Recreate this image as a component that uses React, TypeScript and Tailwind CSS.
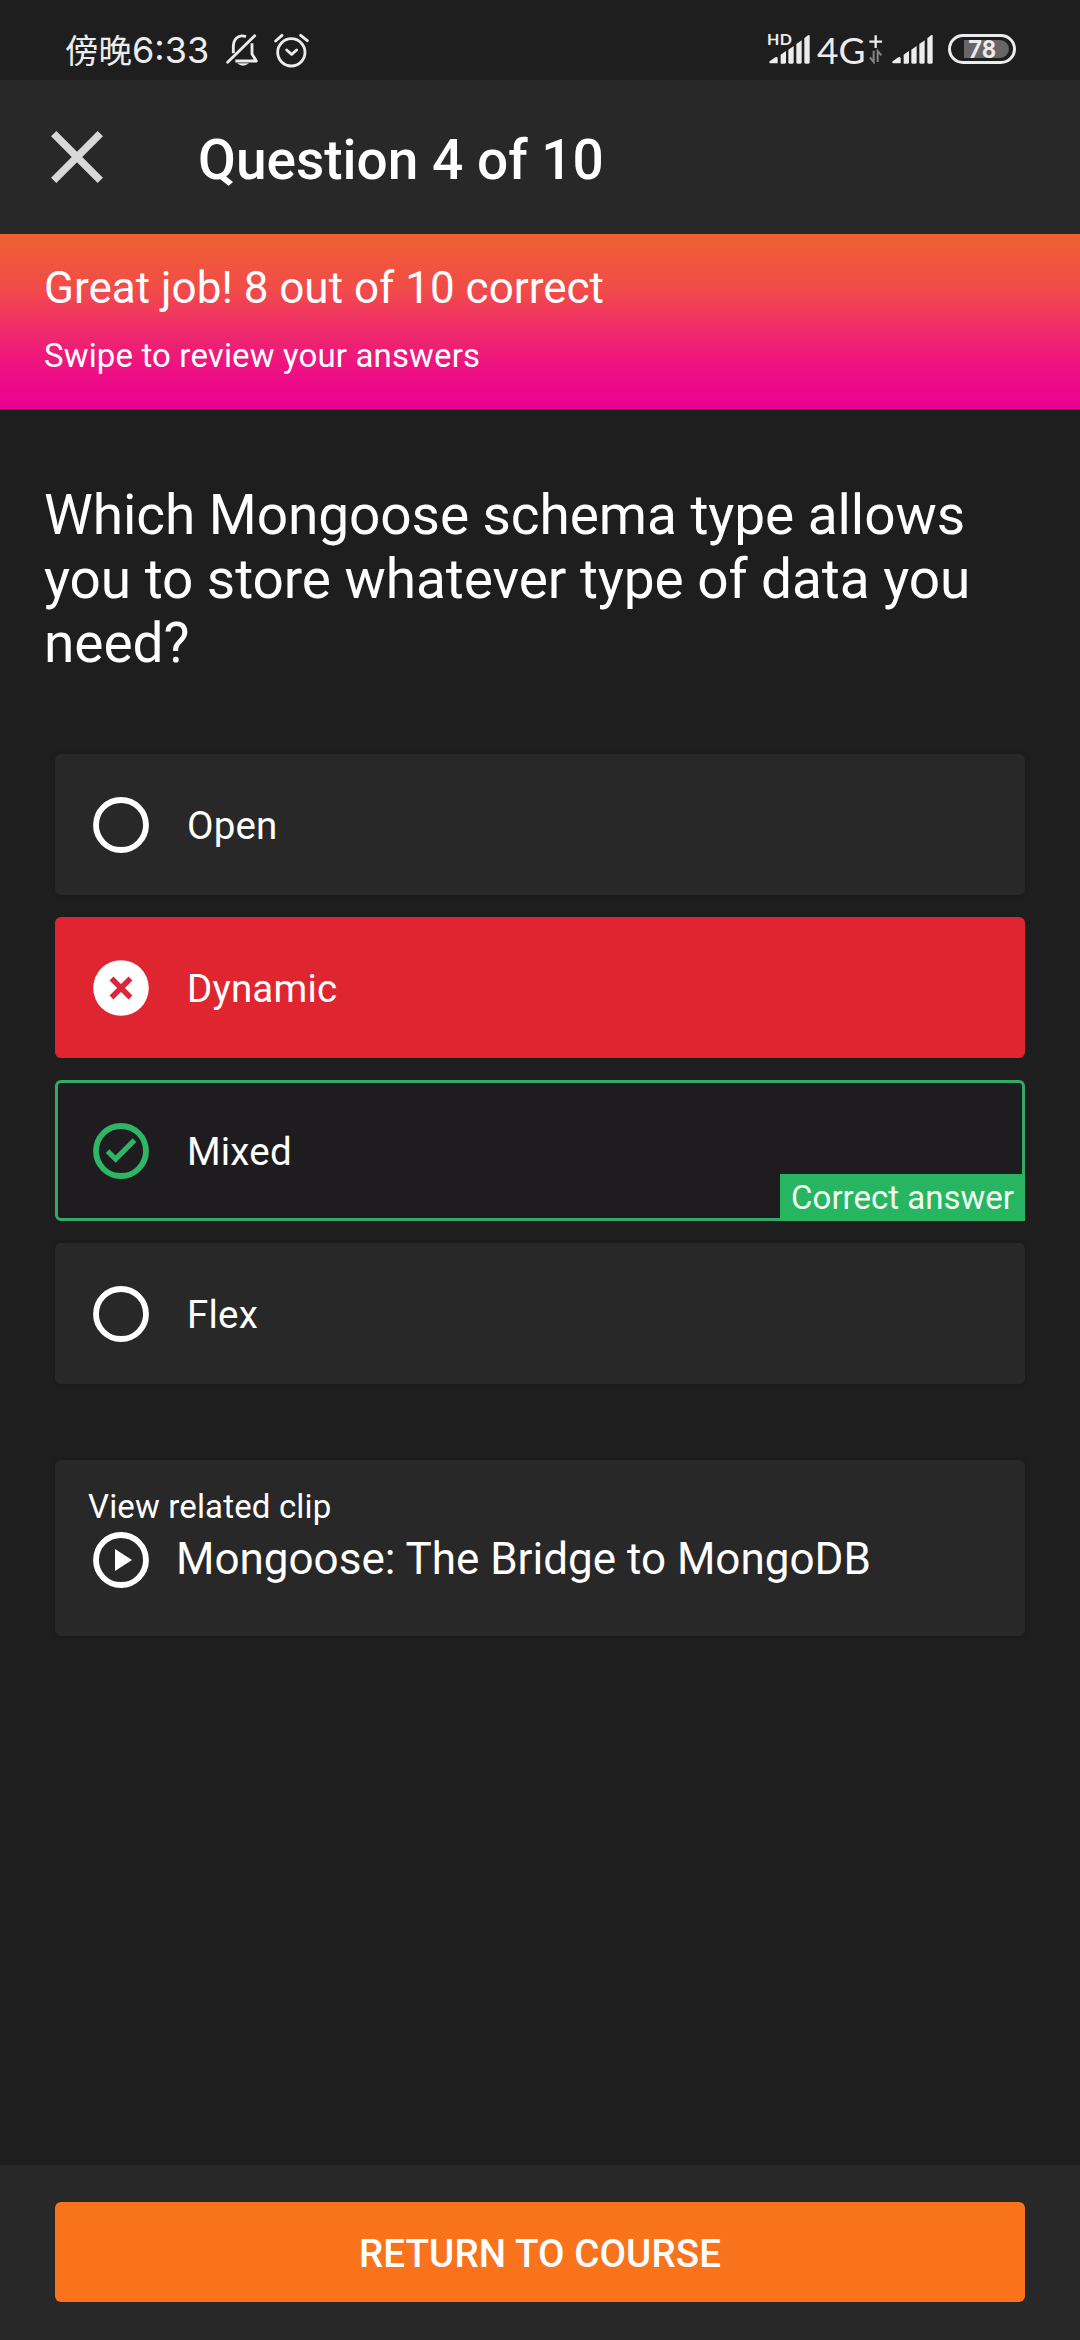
import type { ReactNode } from "react";

type OptionState = "idle" | "wrong" | "correct";

const OPTIONS: { label: string; state: OptionState }[] = [
  { label: "Open", state: "idle" },
  { label: "Dynamic", state: "wrong" },
  { label: "Mixed", state: "correct" },
  { label: "Flex", state: "idle" },
];

const CARD_CLASS: Record<OptionState, string> = {
  idle: "bg-[#282828] shadow-[0_0_5px_rgba(0,0,0,0.2)]",
  wrong: "bg-[#df2630]",
  correct: "bg-[#1e1c1f] border-[3px] border-[#35aa68]",
};

function SignalBars() {
  return (
    <svg className="block h-[30px] w-[41px]" viewBox="0 0 123 90" fill="#ececec">
      <path d="M3 88q-5-3 0-7l16-11q7-3 7 3v15z" />
      <path d="M35 62l16-11v34q0 4-4 4h-12z" />
      <path d="M58 47l16-11v49q0 4-4 4h-8q-4 0-4-4z" />
      <path d="M82 30l16-11v66q0 4-4 4h-8q-4 0-4-4z" />
      <path d="M106 13l11-9q5-3 5 3v78q0 4-4 4h-8q-4 0-4-4z" />
    </svg>
  );
}

function BellOff() {
  return (
    <svg className="block h-[33px] w-[33px]" viewBox="0 0 99 99" fill="none" stroke="#ececec" strokeWidth="8.5">
      <path d="M60 8C35-1 22 18 22 38V58" />
      <path d="M78 28V60L91 81H28" strokeLinejoin="round" />
      <path d="M5 85L86 5" strokeLinecap="round" />
      <path d="M33 88H69Q51 102 33 88z" fill="#ececec" stroke="none" />
    </svg>
  );
}

function Alarm() {
  return (
    <svg
      className="block h-[35px] w-[35px]"
      viewBox="0 0 105 105"
      fill="none"
      stroke="#ececec"
      strokeWidth="8.5"
      strokeLinecap="round"
      strokeLinejoin="round"
    >
      <circle cx="52" cy="58" r="41" />
      <path d="M5 24L24 7M80 7L100 23" />
      <path d="M38 51L53 64L68 51" />
    </svg>
  );
}

function StatusBar() {
  return (
    <div className="flex h-[80px] items-start justify-between bg-[#1e1e1e] pl-[65px] pr-[64px] text-[#ececec]">
      <div className="flex items-start">
        <span className="mt-[29px] w-[161px] whitespace-nowrap font-['Inter','Noto_Sans_CJK_TC',sans-serif] text-[36px] leading-[42px]">
          <span className="text-[33.5px]">傍晚</span>6:33
        </span>
        <div className="mt-[34px]">
          <BellOff />
        </div>
        <div className="ml-[15px] mt-[33px]">
          <Alarm />
        </div>
      </div>
      <div className="flex items-start">
        <div className="relative mt-[34px]">
          <SignalBars />
          <span className="absolute -left-[2px] -top-[2px] font-['Lato',sans-serif] text-[16px] font-bold leading-[14px] tracking-[0.5px]">
            HD
          </span>
        </div>
        <span className="ml-[7px] mt-[29px] w-[52px] whitespace-nowrap font-['Lato',sans-serif] text-[37px] leading-[42px]">
          4G
        </span>
        <svg className="mt-[34px] block h-[30px] w-[14px]" viewBox="0 0 42 90" fill="none">
          <path d="M1 23H39M20 4V42" stroke="#ececec" strokeWidth="7" />
          <path d="M14 50V84L3 70M26 84V51L37 64" stroke="#858585" strokeWidth="6" />
        </svg>
        <div className="ml-[9px] mt-[34px]">
          <SignalBars />
        </div>
        <div className="ml-[15px] mt-[34px] flex h-[30px] w-[68px] items-center justify-center rounded-full border-[3px] border-[#ececec]">
          <div className="ml-[9px] flex h-[18px] w-[45px] items-center rounded-r-full bg-[#666] pl-[4px] font-['Lato',sans-serif] text-[24px] font-black leading-[18px]">
            78
          </div>
        </div>
      </div>
    </div>
  );
}

function Ring({ color, children }: { color: string; children?: ReactNode }) {
  return (
    <svg className="block size-[56px] shrink-0" viewBox="0 0 56 56" fill="none">
      <circle cx="28" cy="28" r="25" stroke={color} strokeWidth="5.8" />
      {children}
    </svg>
  );
}

function OptionIcon({ state }: { state: OptionState }) {
  if (state === "wrong") {
    return (
      <svg className="block size-[56px] shrink-0" viewBox="0 0 56 56" fill="none">
        <circle cx="28" cy="28" r="27.8" fill="#fff" />
        <path d="M18.5 18.5L37.5 37.5M37.5 18.5L18.5 37.5" stroke="#d9283c" strokeWidth="5.4" />
      </svg>
    );
  }
  if (state === "correct") {
    return (
      <Ring color="#2fb566">
        <path d="M14.5 28.2L22.6 36L41.5 17.2" stroke="#2fb566" strokeWidth="5.2" />
      </Ring>
    );
  }
  return <Ring color="#fff" />;
}

function OptionCard({ label, state }: { label: string; state: OptionState }) {
  return (
    <div className={`relative box-border h-[141px] rounded-[6px] ${CARD_CLASS[state]}`}>
      <div className={`flex h-full items-center ${state === "correct" ? "pl-[35px]" : "pl-[38px]"}`}>
        <OptionIcon state={state} />
        <span className="ml-[38px] mt-[3px] text-[38.5px] leading-[46px] tracking-[0.2px]">{label}</span>
      </div>
      {state === "correct" && (
        <span className="absolute -bottom-[3px] -right-[3px] flex h-[47px] w-[245px] items-center justify-center whitespace-nowrap bg-[#27b562] text-[33px] leading-[47px] text-[#effff0]">
          Correct answer
        </span>
      )}
    </div>
  );
}

export default function App() {
  return (
    <div className="flex h-[2340px] w-[1080px] flex-col overflow-hidden bg-[#1e1e1e] font-['Roboto',sans-serif] text-white">
      <StatusBar />
      <header className="flex h-[154px] items-center bg-[#282828] pl-[51px]">
        <svg className="block size-[52px]" viewBox="0 0 52 52" stroke="#d8d8d8" strokeWidth="7.5">
          <path d="M2.7 2.7L49.3 49.3M49.3 2.7L2.7 49.3" />
        </svg>
        <h1 className="ml-[95px] mt-[6px] whitespace-nowrap text-[55px] font-medium leading-[64px]">
          Question 4 of 10
        </h1>
      </header>
      <section className="flex h-[175px] flex-col gap-[22px] bg-[linear-gradient(to_bottom,#ee6030_0%,#f24b4a_32%,#ef2b6a_55%,#ee1281_75%,#ea0094_100%)] pl-[44px] pt-[28px]">
        <p className="text-[44px] leading-[52px]">Great job! 8 out of 10 correct</p>
        <p className="text-[33px] leading-[39px] tracking-[0.14px]">Swipe to review your answers</p>
      </section>
      <main className="flex flex-1 flex-col pt-[74px]">
        <h2 className="px-[44px] text-[55px] leading-[64px] tracking-[-0.08px]">
          Which Mongoose schema type allows
          <br />
          you to store whatever type of data you
          <br />
          need?
        </h2>
        <div className="mt-[79px] flex flex-col gap-[22px] px-[55px]">
          {OPTIONS.map((o) => (
            <OptionCard key={o.label} label={o.label} state={o.state} />
          ))}
        </div>
        <div className="mx-[55px] mt-[76px] flex h-[176px] flex-col rounded-[6px] bg-[#282828] pt-[28px] shadow-[0_0_5px_rgba(0,0,0,0.2)]">
          <p className="pl-[33px] text-[33px] leading-[38px] tracking-[0.15px]">View related clip</p>
          <div className="mt-[6px] flex items-center pl-[38px]">
            <Ring color="#fff">
              <path d="M22 17L39 28L22 39z" fill="#fff" />
            </Ring>
            <span className="-mt-[2px] ml-[27px] whitespace-nowrap text-[44px] leading-[52px]">
              Mongoose: The Bridge to MongoDB
            </span>
          </div>
        </div>
      </main>
      <footer className="h-[175px] bg-[#282828] px-[55px] pt-[37px]">
        <button className="flex h-[100px] w-full items-center justify-center rounded-[6px] bg-[#f8731b] pt-[3px] text-[38.5px] font-medium leading-[46px] tracking-[0.1px]">
          RETURN TO COURSE
        </button>
      </footer>
    </div>
  );
}
